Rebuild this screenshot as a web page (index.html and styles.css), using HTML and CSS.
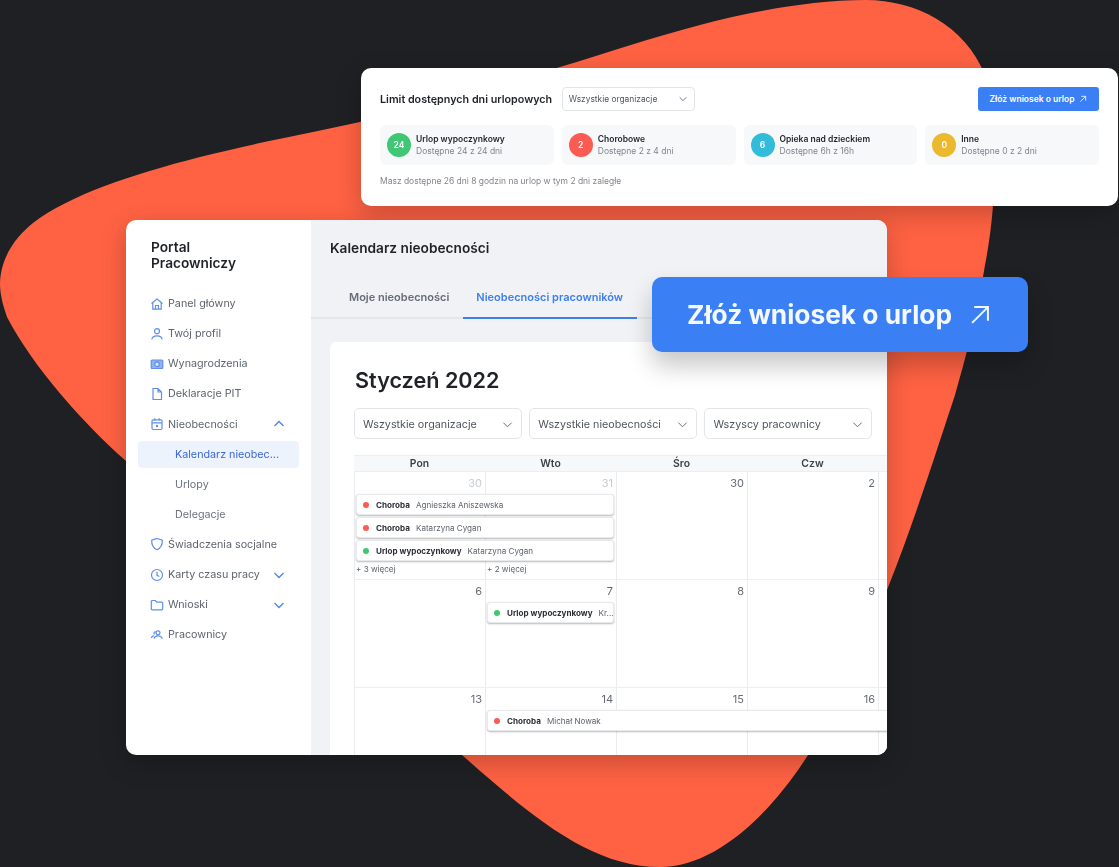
FILE: index.html
```html
<!DOCTYPE html>
<html lang="pl">
<head>
<meta charset="utf-8">
<title>Portal Pracowniczy</title>
<link rel="stylesheet" href="styles.css">
</head>
<body>
<div class="stage">
  <svg class="blob" width="1119" height="867" viewBox="0 0 1119 867"><path d="M866 0C915 0 965 25 985 75C998 120 998 200 985 265C976 320 965 360 955 395C940 440 915 520 887 590C865 650 838 710 808 755C770 815 715 867 660 867C590 867 530 815 462 755C380 680 200 530 126 461C83 423 33 367 7 317C3 305 0 295 0 283C1 255 18 235 33 223C70 195 130 175 200 157C260 142 310 133 360 122C430 106 495 86 560 67C610 52 650 38 700 25C750 12 810 0 866 0Z"/></svg>

  <section class="limits">
    <div class="limits-head">
      <h2 class="limits-title">Limit dostępnych dni urlopowych</h2>
      <div class="select select-small"><span>Wszystkie organizacje</span><svg class="chev" viewBox="0 0 12 12"><path d="M2 4l4 4 4-4"/></svg></div>
      <button class="btn-small">Złóż wniosek o urlop <svg class="arrow" viewBox="0 0 12 12"><path d="M2 10L10 2M3.5 2H10V8.5"/></svg></button>
    </div>
    <div class="tiles">
      <div class="tile"><span class="badge green">24</span><div><div class="tile-title">Urlop wypoczynkowy</div><div class="tile-sub">Dostępne 24 z 24 dni</div></div></div>
      <div class="tile"><span class="badge red">2</span><div><div class="tile-title">Chorobowe</div><div class="tile-sub">Dostępne 2 z 4 dni</div></div></div>
      <div class="tile"><span class="badge cyan">6</span><div><div class="tile-title">Opieka nad dzieckiem</div><div class="tile-sub">Dostępne 6h z 16h</div></div></div>
      <div class="tile"><span class="badge yellow">0</span><div><div class="tile-title">Inne</div><div class="tile-sub">Dostępne 0 z 2 dni</div></div></div>
    </div>
    <p class="limits-foot">Masz dostępne 26 dni 8 godzin na urlop w tym 2 dni zaległe</p>
  </section>

  <section class="app">
    <aside class="sidebar">
      <h1 class="brand">Portal<br>Pracowniczy</h1>
      <nav class="nav">
        <a class="nav-item"><svg class="ico" viewBox="0 0 14 14"><path d="M1.500 6.500L7 2l5.500 4.500M2.800 5.800V12.200H11.200V5.800M5.500 12V8.500H8.500V12"/></svg>Panel główny</a>
        <a class="nav-item"><svg class="ico" viewBox="0 0 14 14"><circle cx="7" cy="4.200" r="2.500"/><path d="M1.800 12.500C2.200 9.800 4 8.800 7 8.800s4.800 1 5.200 3.700"/></svg>Twój profil</a>
        <a class="nav-item"><svg class="ico" viewBox="0 0 14 14"><rect class="ico-fill" x="1.200" y="3" width="11.600" height="8.500" rx="1"/><circle class="ico-hole" cx="7" cy="7.200" r="2.300"/></svg>Wynagrodzenia</a>
        <a class="nav-item"><svg class="ico" viewBox="0 0 14 14"><path d="M3 1.500H8L11.500 5V12.500H3ZM8 1.500V5H11.500"/></svg>Deklaracje PIT</a>
        <a class="nav-item"><svg class="ico" viewBox="0 0 14 14"><rect x="2" y="2.800" width="10" height="9.700" rx="1.200"/><path d="M2 5.800H12M4.800 1.300V3.500M9.200 1.300V3.500"/><circle class="ico-dot" cx="7" cy="9" r="1.200"/></svg>Nieobecności<svg class="nav-chev" viewBox="0 0 12 12"><path d="M1.500 8L6 3.500 10.500 8"/></svg></a>
        <a class="nav-sub active">Kalendarz nieobec...</a>
        <a class="nav-sub">Urlopy</a>
        <a class="nav-sub">Delegacje</a>
        <a class="nav-item"><svg class="ico" viewBox="0 0 14 14"><path d="M7 1.500L12.300 3.200C12.500 8 10.800 11 7 12.800 3.200 11 1.500 8 1.700 3.200Z"/></svg>Świadczenia socjalne</a>
        <a class="nav-item"><svg class="ico" viewBox="0 0 14 14"><circle cx="7" cy="7" r="5.500"/><path d="M7 3.800V7.300L9.300 8.500"/></svg>Karty czasu pracy<svg class="nav-chev" viewBox="0 0 12 12"><path d="M1.500 4L6 8.500 10.500 4"/></svg></a>
        <a class="nav-item"><svg class="ico" viewBox="0 0 14 14"><path d="M1.300 3.500C1.300 2.800 1.800 2.500 2.300 2.500H5.300L6.800 4.200H11.700C12.300 4.200 12.700 4.600 12.700 5.200V10.800C12.700 11.400 12.300 11.800 11.700 11.800H2.300C1.700 11.800 1.300 11.400 1.300 10.800Z"/></svg>Wnioski<svg class="nav-chev" viewBox="0 0 12 12"><path d="M1.500 4L6 8.500 10.500 4"/></svg></a>
        <a class="nav-item"><svg class="ico" viewBox="0 0 14 14"><circle cx="8" cy="4.800" r="2"/><path d="M4 10.500C4.500 8.600 6 7.800 8 7.800s3.500.8 4.500 2.700M5.500 3.800C4 3.800 3.500 5.500 4.500 6.500M1.300 10C1.700 8.600 2.500 7.900 3.800 7.600"/></svg>Pracownicy</a>
      </nav>
    </aside>

    <main class="main">
      <h2 class="page-title">Kalendarz nieobecności</h2>
      <div class="tabs">
        <div class="tab">Moje nieobecności</div>
        <div class="tab tab-active">Nieobecności pracowników</div>
      </div>
      <div class="card">
        <h3 class="month">Styczeń 2022</h3>
        <div class="filters">
          <div class="select"><span>Wszystkie organizacje</span><svg class="chev" viewBox="0 0 12 12"><path d="M1.500 4L6 8.500 10.500 4"/></svg></div>
          <div class="select"><span>Wszystkie nieobecności</span><svg class="chev" viewBox="0 0 12 12"><path d="M1.500 4L6 8.500 10.500 4"/></svg></div>
          <div class="select"><span>Wszyscy pracownicy</span><svg class="chev" viewBox="0 0 12 12"><path d="M1.500 4L6 8.500 10.500 4"/></svg></div>
        </div>
        <div class="calendar">
          <div class="cal-head"><span>Pon</span><span>Wto</span><span>Śro</span><span>Czw</span></div>
          <div class="week">
            <span class="num muted">30</span><span class="num muted">31</span><span class="num">30</span><span class="num">2</span><span class="num"></span>
            <div class="event span2"><i class="dot dot-red"></i><b>Choroba</b><span>Agnieszka Aniszewska</span></div>
            <div class="event span2"><i class="dot dot-red"></i><b>Choroba</b><span>Katarzyna Cygan</span></div>
            <div class="event span2"><i class="dot dot-green"></i><b>Urlop wypoczynkowy</b><span>Katarzyna Cygan</span></div>
            <div class="more more-1">+ 3 więcej</div><div class="more more-2">+ 2 więcej</div>
          </div>
          <div class="week">
            <span class="num">6</span><span class="num">7</span><span class="num">8</span><span class="num">9</span><span class="num"></span>
            <div class="event col2"><i class="dot dot-green"></i><b>Urlop wypoczynkowy</b><span>Kr...</span></div>
          </div>
          <div class="week">
            <span class="num">13</span><span class="num">14</span><span class="num">15</span><span class="num">16</span><span class="num"></span>
            <div class="event col2 wide"><i class="dot dot-red"></i><b>Choroba</b><span>Michał Nowak</span></div>
          </div>
        </div>
      </div>
    </main>
  </section>

  <button class="btn-big"><span>Złóż wniosek o urlop</span><svg class="arrow-big" viewBox="0 0 24 24"><path d="M2.500 21.500L21.500 2.500M5 2.500H21.500V19"/></svg></button>
</div>
</body>
</html>
```

FILE: styles.css
```css
* { box-sizing: border-box; }
html, body { margin: 0; padding: 0; }
body { background: #1f2023; font-family: Inter, "Liberation Sans", sans-serif; color: #1f2328; }
.stage { position: relative; width: 1119px; height: 867px; overflow: hidden; }
.blob { position: absolute; left: 0; top: 0; }
.blob path { fill: #ff6243; }
h1, h2, h3, p { margin: 0; }

/* Limits card */
.limits { position: absolute; left: 361px; top: 68px; width: 757px; height: 138px; background: #fff; border-radius: 10px; padding: 19px 19px 0; box-shadow: 0 8px 26px rgba(0,0,0,.22); filter: blur(.3px); }
.limits-head { display: flex; align-items: center; height: 24px; }
.limits-title { font-size: 10.750px; font-weight: 600; white-space: nowrap; margin-right: 9.500px; }
.btn-small { margin-left: auto; width: 121px; height: 24px; border: 0; border-radius: 3px; background: #3b7ff5; color: #fff; font: 600 8.500px Inter, sans-serif; display: flex; align-items: center; justify-content: center; gap: 5px; }
.arrow { width: 8px; height: 8px; fill: none; stroke: #fff; stroke-width: 1.200; }
.tiles { display: grid; grid-template-columns: repeat(4, 1fr); gap: 8px; margin-top: 14px; }
.tile { height: 40px; background: #f7f8fa; border-radius: 6px; padding: 8px 7px; display: flex; gap: 5px; align-items: center; }
.badge { flex: none; width: 24px; height: 24px; border-radius: 50%; color: #fff; font-size: 8.500px; font-weight: 600; display: flex; align-items: center; justify-content: center; }
.green { background: #3fc775; }
.red { background: #fb5b53; }
.cyan { background: #33bcd9; }
.yellow { background: #ebb92e; }
.tile-title { font-size: 8.500px; font-weight: 600; line-height: 12px; }
.tile-sub { font-size: 8.500px; line-height: 12px; color: #80858e; }
.limits-foot { margin-top: 11px; font-size: 8.480px; line-height: 11px; color: #80858e; }

/* App panel */
.app { position: absolute; left: 126px; top: 220px; width: 761px; height: 535px; background: #fff; border-radius: 10px; overflow: hidden; display: flex; box-shadow: 0 8px 26px rgba(0,0,0,.22); filter: blur(.3px); }
.sidebar { flex: none; width: 185px; padding: 19px 12px 0; }
.brand { font-size: 13.700px; font-weight: 600; line-height: 16.400px; padding-left: 13px; }
.nav { margin-top: 16.800px; display: flex; flex-direction: column; }
.nav-item, .nav-sub { height: 30.100px; display: flex; align-items: center; font-size: 10.750px; color: #5d646f; white-space: nowrap; }
.nav-item { padding-left: 12px; gap: 4px; }
.nav-sub { padding-left: 37px; color: #6b7280; }
.nav-sub.active { color: #3a67d8; background: #edf3fd; border-radius: 4px; height: 27px; margin: 1.500px 0 1.600px; }
.ico { flex: none; width: 14px; height: 14px; fill: none; stroke: #5f8fe8; stroke-width: 1.200; }
.ico-fill { fill: #8fb3f0; }
.ico-hole { fill: #dbe7fb; stroke: #5f8fe8; }
.ico-dot { fill: #5f8fe8; stroke: none; }
.nav-chev { margin-left: auto; margin-right: 14px; width: 12px; height: 12px; fill: none; stroke: #4f82e6; stroke-width: 1.300; }

/* Main */
.main { flex: 1; min-width: 0; background: #f0f2f6; padding-top: 19px; }
.page-title { font-size: 13.700px; font-weight: 600; line-height: 18px; margin-left: 19px; }
.tabs { margin-top: 22px; height: 40px; padding-left: 24.500px; display: flex; border-bottom: 2px solid #e3e6eb; }
.tab { padding: 0 13.500px; height: 40px; line-height: 37px; font-size: 11px; font-weight: 600; color: #656c78; white-space: nowrap; }
.tab-active { color: #3d7ff0; border-bottom: 2px solid #3d7ff0; }
.card { margin: 23px 0 0 19px; width: 700px; background: #fff; border-radius: 6px; padding: 24px 0 0 24px; }
.month { font-size: 21.600px; font-weight: 600; line-height: 28px; margin-left: 1px; }
.filters { display: flex; gap: 7.200px; margin-top: 14px; }
.select { width: 168px; height: 31px; border: 1px solid #e2e4e8; border-radius: 5px; padding: 1px 8px 0; display: flex; align-items: center; justify-content: space-between; font-size: 10.750px; color: #4e5560; white-space: nowrap; }
.select-small { width: 133px; height: 24px; border-radius: 4px; padding: 0 6px; font-size: 8.400px; }
.chev { width: 11px; height: 11px; fill: none; stroke: #596069; stroke-width: 1; flex: none; }
.select-small .chev { width: 10px; height: 10px; }

/* Calendar */
.calendar { margin-top: 16px; width: 660px; }
.cal-head { height: 17px; background: #f7f8fa; border-top: 1px solid #eceef1; border-bottom: 1px solid #eceef1; display: grid; grid-template-columns: repeat(5, 131px); font-size: 10.400px; font-weight: 600; line-height: 15px; text-align: center; color: #3b4048; }
.week { height: 108px; display: grid; grid-template-columns: repeat(5, 131px); grid-auto-rows: min-content; align-content: start; border-bottom: 1px solid #eceef1; background-image: repeating-linear-gradient(90deg, #e9ebef 0 1px, transparent 1px 131px); }
.num { height: 21px; line-height: 22px; padding-right: 3px; text-align: right; font-size: 11px; color: #666c76; }
.num.muted { color: #c9ccd1; }
.event { height: 21px; margin: 1px 2px; background: #fff; border: 1px solid #e8e9ec; border-radius: 3px; box-shadow: 0 1px 2px rgba(0,0,0,.28); padding-left: 6px; display: flex; align-items: center; font-size: 8.100px; color: #5d646f; white-space: nowrap; overflow: hidden; position: relative; }
.event b { color: #2a2e35; font-weight: 700; margin-right: 6px; }
.dot { flex: none; width: 6px; height: 6px; border-radius: 50%; margin-right: 7px; }
.dot-red { background: #fb5b53; }
.dot-green { background: #3fc775; }
.span2 { grid-column: 1 / span 2; }
.col2 { grid-column: 2; }
.wide { grid-column: 2 / span 4; margin-right: 0; }
.more { height: 15px; line-height: 15px; padding-left: 2px; font-size: 8.100px; color: #5d646f; }
.more-1 { grid-column: 1; }
.more-2 { grid-column: 2; }

/* Large call-to-action */
.btn-big { position: absolute; left: 652px; top: 277px; width: 376px; height: 75px; border: 0; border-radius: 10px; background: #3b7ff5; color: #f4f8ff; font: 700 26.300px Inter, sans-serif; display: flex; align-items: center; padding: 0 0 0 35px; gap: 18px; box-shadow: 0 14px 24px rgba(0,0,0,.22); }
.btn-big span { filter: blur(.6px); }
.arrow-big { width: 20px; height: 20px; fill: none; stroke: #f4f8ff; stroke-width: 2.400; }
```
